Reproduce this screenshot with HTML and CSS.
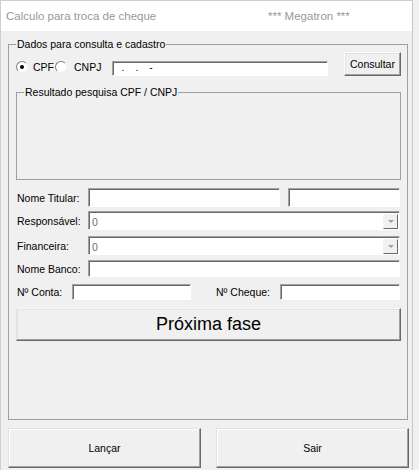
FILE: index.html
```html
<!DOCTYPE html>
<html lang="pt">
<head>
<meta charset="utf-8">
<title>Calculo para troca de cheque</title>
<link rel="stylesheet" href="styles.css">
</head>
<body>
<div class="window">
  <div class="titlebar">
    <span class="title">Calculo para troca de cheque</span>
    <span class="app">*** Megatron ***</span>
  </div>
  <div class="client">
    <fieldset class="group main">
      <legend>Dados para consulta e cadastro</legend>
      <div class="row search">
        <span class="radio checked"></span><span class="rlabel cpf">CPF</span>
        <span class="radio"></span><span class="rlabel cnpj">CNPJ</span>
        <div class="field doc">&nbsp;&nbsp;.&nbsp;&nbsp;&nbsp;&nbsp;.&nbsp;&nbsp;&nbsp;&nbsp;-</div>
        <button class="btn consult">Consultar</button>
      </div>
      <fieldset class="group result">
        <legend>Resultado pesquisa CPF / CNPJ</legend>
      </fieldset>
      <div class="row r-titular">
        <span class="lbl">Nome Titular:</span>
        <div class="field t1"></div>
        <div class="field t2"></div>
      </div>
      <div class="row r-resp">
        <span class="lbl">Responsável:</span>
        <div class="field combo"><span class="val">0</span><span class="arrow"><span class="tri"></span></span></div>
      </div>
      <div class="row r-fin">
        <span class="lbl">Financeira:</span>
        <div class="field combo"><span class="val">0</span><span class="arrow"><span class="tri"></span></span></div>
      </div>
      <div class="row r-banco">
        <span class="lbl">Nome Banco:</span>
        <div class="field wide"></div>
      </div>
      <div class="row r-conta">
        <span class="lbl conta">Nº Conta:</span>
        <div class="field c1"></div>
        <span class="lbl cheque">Nº Cheque:</span>
        <div class="field c2"></div>
      </div>
      <button class="btn next">Próxima fase</button>
    </fieldset>
    <div class="actions">
      <button class="btn big">Lançar</button>
      <button class="btn big">Sair</button>
    </div>
  </div>
</div>
</body>
</html>
```
FILE: styles.css
```css
html, body {
  margin: 0;
  padding: 0;
  background: #f0f0f0;
}
body {
  font-family: "Liberation Sans", Arial, sans-serif;
  font-size: 10.5px;
  color: #000;
}
.window {
  width: 413px;
  height: 470px;
  box-sizing: border-box;
  border-left: 1px solid #cfcfcf;
  border-right: 1px solid #c8c8c8;
  background: #f0f0f0;
  overflow: hidden;
}
.titlebar {
  height: 30px;
  border-top: 1px solid #cfcfcf;
  background: #fff;
  display: flex;
  align-items: center;
  padding-left: 5px;
  color: #999;
  font-size: 11.5px;
}
.title {
  width: 262px;
}
.client {
  padding-left: 7px;
}
.group {
  margin: 0;
  border: 1px solid #a0a0a0;
  box-sizing: border-box;
  min-inline-size: 0;
}
.group legend {
  padding: 0 1px;
  line-height: 14px;
}
.main {
  margin-top: 6px;
  width: 400px;
  padding: 1px 6px 78px 7px;
}
.row {
  display: flex;
  align-items: center;
}
.search {
  height: 24px;
  align-items: flex-end;
}
.radio {
  width: 12px;
  height: 12px;
  box-sizing: border-box;
  border-radius: 50%;
  border: 1px solid;
  border-color: #808080 #f4f4f4 #f4f4f4 #808080;
  background: #fff;
  margin-bottom: 3px;
  position: relative;
  flex: none;
}
.radio.checked::after {
  content: "";
  position: absolute;
  left: 3px;
  top: 3px;
  width: 4px;
  height: 4px;
  border-radius: 50%;
  background: #000;
}
.rlabel {
  line-height: 14px;
  margin-bottom: 2px;
  flex: none;
}
.cpf {
  margin-left: 5px;
  width: 22px;
}
.cnpj {
  margin-left: 7px;
  width: 38px;
}
.field {
  box-sizing: border-box;
  background: #fff;
  border: 1px solid;
  border-color: #a0a0a0 #fff #fff #a0a0a0;
  box-shadow: inset 1px 1px 0 #696969;
  height: 19px;
  flex: none;
}
.doc {
  width: 216px;
  height: 15px;
  line-height: 11px;
  padding-left: 3px;
  font-size: 10px;
}
.btn {
  font-family: "Liberation Sans", Arial, sans-serif;
  font-size: 10.5px;
  color: #000;
  background: #f0f0f0;
  box-sizing: border-box;
  border: 1px solid;
  border-color: #fff #696969 #696969 #fff;
  box-shadow: inset -1px -1px 0 #a0a0a0, inset 1px 1px 0 #e3e3e3;
  padding: 0;
  margin: 0;
  flex: none;
}
.consult {
  margin-left: 16px;
  width: 57px;
  height: 24px;
}
.result {
  margin-top: 10px;
  height: 94px;
  padding: 0 7px;
}
.result legend {
  line-height: 12px;
}
.lbl {
  width: 72px;
  padding-left: 1px;
  box-sizing: border-box;
  flex: none;
  white-space: nowrap;
}
.r-titular {
  margin-top: 8px;
  height: 19px;
}
.t1 {
  width: 192px;
}
.t2 {
  width: 112px;
  margin-left: 8px;
}
.r-resp {
  margin-top: 4px;
  height: 19px;
}
.r-fin {
  margin-top: 6px;
  height: 19px;
}
.combo {
  width: 312px;
  display: flex;
  align-items: center;
  justify-content: space-between;
  padding: 1px 1px 0 3px;
}
.combo .val {
  color: #6d6d6d;
  line-height: 14px;
  padding-top: 2px;
}
.arrow {
  width: 15px;
  height: 15px;
  box-sizing: border-box;
  background: #f0f0f0;
  border: 1px solid;
  border-color: #f4f4f4 #696969 #696969 #f4f4f4;
  display: flex;
  align-items: center;
  justify-content: center;
}
.tri {
  width: 0;
  height: 0;
  border-left: 3px solid transparent;
  border-right: 3px solid transparent;
  border-top: 3px solid #a0a0a0;
}
.r-banco {
  margin-top: 5px;
  height: 17px;
}
.wide {
  width: 312px;
  height: 17px;
}
.r-conta {
  margin-top: 7px;
  height: 16px;
}
.conta {
  width: 56px;
}
.c1 {
  width: 119px;
  height: 16px;
}
.cheque {
  width: 64px;
  margin-left: 25px;
  padding-left: 0;
}
.c2 {
  width: 120px;
  height: 16px;
}
.next {
  display: block;
  margin-top: 8px;
  width: 385px;
  height: 33px;
  font-size: 18px;
  border-color: #f8f8f8 #696969 #696969 #e3e3e3;
}
.actions {
  display: flex;
  gap: 15px;
  margin-top: 8px;
}
.big {
  width: 193px;
  height: 40px;
  border-color: #e3e3e3 #696969 #696969 #e3e3e3;
  box-shadow: inset -1px -1px 0 #a0a0a0, inset 1px 1px 0 #fff;
}
```
